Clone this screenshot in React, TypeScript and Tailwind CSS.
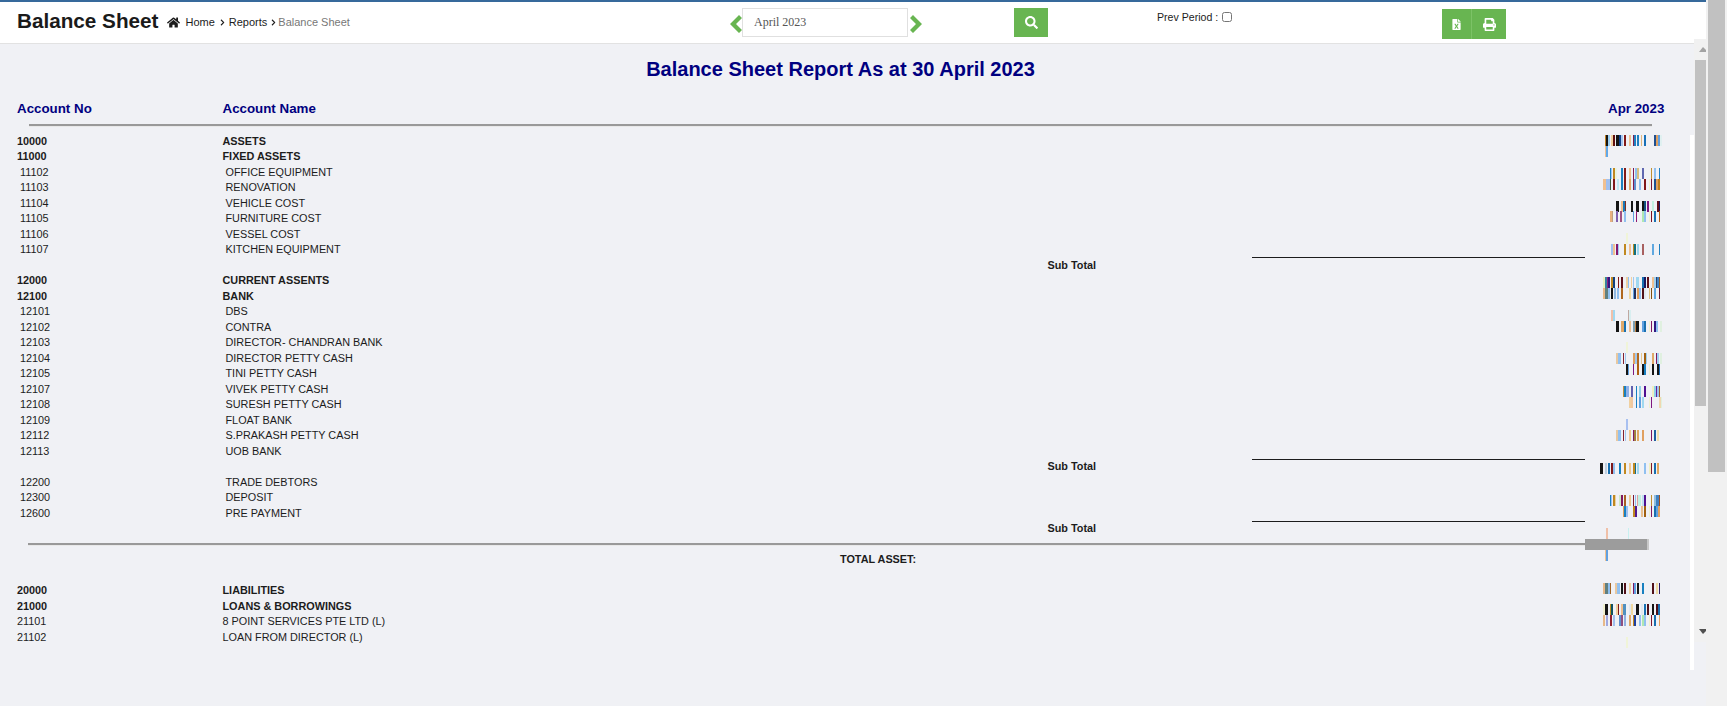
import { FaChevronRight, FaFileExcel, FaHome, FaPrint, FaSearch } from 'react-icons/fa';

type Row =
  | { kind: 'head'; no: string; name: string }
  | { kind: 'item'; no: string; name: string; plain?: boolean }
  | { kind: 'sub' }
  | { kind: 'hr' }
  | { kind: 'total' }
  | { kind: 'gap' };

const rows: Row[] = [
  { kind: 'head', no: '10000', name: 'ASSETS' },
  { kind: 'head', no: '11000', name: 'FIXED ASSETS' },
  { kind: 'item', no: '11102', name: 'OFFICE EQUIPMENT' },
  { kind: 'item', no: '11103', name: 'RENOVATION' },
  { kind: 'item', no: '11104', name: 'VEHICLE COST' },
  { kind: 'item', no: '11105', name: 'FURNITURE COST' },
  { kind: 'item', no: '11106', name: 'VESSEL COST' },
  { kind: 'item', no: '11107', name: 'KITCHEN EQUIPMENT' },
  { kind: 'sub' },
  { kind: 'head', no: '12000', name: 'CURRENT ASSENTS' },
  { kind: 'head', no: '12100', name: 'BANK' },
  { kind: 'item', no: '12101', name: 'DBS' },
  { kind: 'item', no: '12102', name: 'CONTRA' },
  { kind: 'item', no: '12103', name: 'DIRECTOR- CHANDRAN BANK' },
  { kind: 'item', no: '12104', name: 'DIRECTOR PETTY CASH' },
  { kind: 'item', no: '12105', name: 'TINI PETTY CASH' },
  { kind: 'item', no: '12107', name: 'VIVEK PETTY CASH' },
  { kind: 'item', no: '12108', name: 'SURESH PETTY CASH' },
  { kind: 'item', no: '12109', name: 'FLOAT BANK' },
  { kind: 'item', no: '12112', name: 'S.PRAKASH PETTY CASH' },
  { kind: 'item', no: '12113', name: 'UOB BANK' },
  { kind: 'sub' },
  { kind: 'item', no: '12200', name: 'TRADE DEBTORS' },
  { kind: 'item', no: '12300', name: 'DEPOSIT' },
  { kind: 'item', no: '12600', name: 'PRE PAYMENT' },
  { kind: 'sub' },
  { kind: 'hr' },
  { kind: 'total' },
  { kind: 'gap' },
  { kind: 'head', no: '20000', name: 'LIABILITIES' },
  { kind: 'head', no: '21000', name: 'LOANS & BORROWINGS' },
  { kind: 'item', no: '21101', name: '8 POINT SERVICES PTE LTD (L)', plain: true },
  { kind: 'item', no: '21102', name: 'LOAN FROM DIRECTOR (L)', plain: true },
];

// garbled amount column, x and width in thirds of a pixel from x=1595
const stripes: [number, string][] = [
  [135, '30 3 c08020,33 6 151515,39 6 9fd0f0,48 6 f0d0a0,54 6 601010,63 9 151515,72 6 10408a,78 6 a8c8f0,87 6 801818,102 6 f0c090,114 3 802050,117 6 2080c0,126 6 2080c0,138 3 e0b880,147 6 1870b8,177 6 205090,183 6 e0a060,189 6 60a0e0,195 6 e0f0f0'],
  [146, '30 3 f0c090,33 6 60a8e8'],
  [168, '45 3 2080c0,48 3 a0c8f0,54 6 c08820,60 6 e8f4e0,78 6 2080c0,87 6 801818,102 6 f0c090,114 3 801850,120 6 90c0f0,126 6 d8c080,141 6 6068b0,168 3 c09030,177 6 90c0f0,192 3 2080c0'],
  [179, '24 9 f0c090,33 12 a0c0f0,45 3 406040,54 6 801818,66 6 c0e8f0,78 6 2080c0,87 6 801818,102 6 e0a868,114 3 801850,117 6 6090d0,132 6 90c0f0,147 6 801818,162 3 f0f0d0,168 3 801830,177 6 205090,183 6 e0a060,189 6 c08020'],
  [201, '63 9 151515,78 6 f0c090,84 6 1878b8,90 3 803020,108 6 151515,123 9 151515,141 6 151515,147 6 105080,156 6 801880,171 6 c0f0e0,186 6 601018,192 3 181860'],
  [211, '45 6 e8b080,51 3 c0a080,63 6 8060b0,75 6 a05080,87 6 90c0f0,114 3 60a0e0,123 3 901870,141 6 b0e8b0,147 6 90c0f0,162 3 f0f0d0,168 3 801020,177 6 1870b0,192 3 b06010'],
  [233, '93 6 f0f4d8'],
  [244, '48 6 a0c0f0,54 6 f0c090,63 6 801870,69 3 a0c8f0,87 6 c08820,102 6 f0c090,114 3 c08820,117 6 107080,126 6 a0d8f0,141 6 a86060,171 6 60a8e0,192 3 2080c0'],
  [277, '24 6 e8f0c0,30 6 3880a0,36 3 902080,39 6 301880,48 6 c08820,54 6 104080,69 3 801818,78 6 601018,93 6 f0d0a0,99 3 90c0f0,108 3 f0d0a0,114 3 a0c8f0,123 9 a0d8f0,141 6 1870b0,147 6 181860,156 6 601018,171 6 f0c090,177 6 a0d0f0,183 3 204070,186 6 4080c0,192 3 a06020'],
  [288, '24 6 e8b888,30 9 608080,39 6 90c0f0,48 6 151515,57 6 90b8e0,66 6 90c0f0,78 6 b06820,102 6 f0d8a0,114 3 60a0e0,117 6 203060,126 6 e0a060,132 6 90c0f0,141 6 501018,147 6 e0e8f0,162 3 e0c080,168 3 805010,177 6 60a8e0,192 3 601830'],
  [310, '48 6 f0c0a8,54 6 a0d8f0,99 3 c0a8a0,102 6 d8eef0'],
  [321, '63 9 151515,78 9 e0a868,87 6 1870b0,102 6 f0c090,114 6 80a0b0,120 3 c08040,123 9 151515,141 6 60a0e0,147 6 1870b0,162 3 f0f0d0,168 3 801860,177 6 301880,183 6 90c0f0,195 6 e0f0e0'],
  [342, '93 6 f0f4d8'],
  [353, '63 6 e8c8a0,69 9 90c0f0,84 3 802030,90 3 a0c8f0,114 6 e0a060,120 6 a0c8f0,126 6 b06820,138 3 e8c890,147 6 a06010,153 3 a0d0f0,171 6 e0a868,183 3 801860,186 6 a0d0f0,195 6 e0f0e0'],
  [364, '93 6 151515,99 3 60a0e0,114 3 801880,126 6 b06010,141 6 151515,147 6 1880c0,162 3 f0f0d0,171 6 151515,186 6 151515,192 3 1870c0'],
  [386, '84 3 c09040,87 6 1880c0,93 9 90b0e8,108 6 6060b0,123 3 1880c0,132 6 90d0e8,147 6 501090,171 6 f0f0c0,177 6 90d0e8,183 3 6020a0,186 6 a0c0e8,192 3 a06020'],
  [397, '102 6 f0d0a0,108 6 f0c8a0,123 3 1880c0,132 6 60a0e0,141 6 a0d8f0,162 3 f0f0d0,168 3 801880,192 6 f0d8b0,198 3 e0f0e0'],
  [419, '93 6 a8c0f0'],
  [430, '63 6 e8c8a0,69 9 90c0f0,84 3 802030,90 3 a0c8f0,102 6 f0c890,114 3 801860,117 6 a08040,126 6 e0a860,141 6 e0a060,168 3 801860,177 6 2060a0,186 6 f0e0b0'],
  [463, '15 9 151515,30 6 c0d0e0,39 6 1870b0,48 6 801818,54 6 90c0f0,72 6 1880c0,87 6 c08820,102 6 f0c890,114 6 c08820,120 3 107090,126 6 a0d8f0,147 6 90c0f0,162 6 f0f0c0,168 3 801830,177 6 1870b0,186 6 e0a860'],
  [495, '45 3 1880c0,48 3 a0c0f0,54 6 c08820,60 3 e8d0a0,72 6 d0e8c0,78 6 801860,87 6 a86020,102 6 f0c890,114 3 801830,120 3 90c0f0,126 3 e0a0a0,129 9 c0f0e0,141 6 c0e0f0,147 6 501090,168 3 c09030,177 6 90c0e0,183 9 4080c0,192 3 a05020'],
  [506, '84 3 e0a060,87 6 1880c0,93 6 a0c0f0,114 6 c08820,120 6 501890,138 6 e8c090,147 6 a06010,162 3 f0f0d0,168 3 801860,177 6 1870b0,183 6 60a0e0,189 6 e0a060'],
  [528, '33 6 f0c0a8,99 3 c8f0f0'],
  [550, '30 3 f0c090,33 6 60a0e0'],
  [583, '24 6 e8b888,30 9 608080,39 6 90c0f0,45 3 a06020,60 6 e8c8a0,66 9 90c0f0,78 6 151515,87 6 501018,102 6 f0d0a0,114 3 801860,117 6 60a0e0,126 6 151515,141 6 1880c0,171 6 501018,183 6 f0d8a0,192 3 301860'],
  [604, '24 6 f0f0d0,30 9 151515,45 3 c09020,48 6 105060,63 6 f0d0a0,69 3 801818,78 6 f0c090,84 9 5090c0,102 6 e0e8f0,108 6 f0d8a0,123 9 151515,138 6 e0e8f0,147 6 1870b0,156 6 501018,171 6 151515,183 6 501018,189 6 1870b0'],
  [615, '24 6 e8b888,33 6 a0a8e0,45 6 902030,54 6 a0c0f0,72 6 6090d0,78 6 905080,87 6 90b0e0,102 6 e0a868,114 3 c08820,117 6 2040a0,132 6 90c0f0,141 6 b0e8b0,147 6 90c0f0,162 3 f0f0d0,168 3 801830,177 6 1870b0,192 3 e0a060'],
  [637, '93 6 f0f4d8'],
];

function AmountStripes() {
  return (
    <svg
      className="absolute left-[1595px] top-[86px]"
      width="70"
      height="520"
      viewBox="0 0 210 1560"
      shapeRendering="crispEdges"
    >
      {stripes.map(([y, bars]) =>
        bars.split(',').map((bar) => {
          const [x, w, color] = bar.split(' ');
          return (
            <rect key={`${y}-${x}`} x={x} y={(y - 130) * 3} width={w} height={33} fill={`#${color}`} />
          );
        }),
      )}
    </svg>
  );
}

function ReportRow({ row }: { row: Row }) {
  const grid = 'grid h-[15.5px] grid-cols-[222.5px_825px_204.5px_333px] items-center text-[10.85px] leading-[15.5px] text-[#1c1c1c]';

  if (row.kind === 'gap') return <div className="h-[15.5px]" />;
  if (row.kind === 'hr') {
    return (
      <div className="flex h-[15.5px] items-start pl-[28px]">
        <div className="mt-[6.25px] h-[3px] w-[1557px] border-b border-[#e8e8e8] bg-[#999999]" />
        <div className="mt-[2.25px] h-[11px] w-[62px] bg-[#9c9c9c]" />
        <div className="mt-[2.25px] h-[11px] w-[2px] bg-[#c8c8c8]" />
      </div>
    );
  }
  if (row.kind === 'sub') {
    return (
      <div className={grid}>
        <span />
        <span />
        <span className="font-bold">Sub Total</span>
        <div className="-mt-[0.75px] h-[15.5px] self-start border-t-[1.5px] border-[#1c1c1c]" />
      </div>
    );
  }
  if (row.kind === 'total') {
    return (
      <div className={grid}>
        <span />
        <span className="pl-[617.5px] font-bold">TOTAL ASSET:</span>
      </div>
    );
  }
  if (row.kind === 'head') {
    return (
      <div className={`${grid} font-bold`}>
        <span className="pl-[17px]">{row.no}</span>
        <span>{row.name}</span>
      </div>
    );
  }
  return (
    <div className={grid}>
      <span className={row.plain ? 'pl-[17px]' : 'pl-[20px]'}>{row.no}</span>
      <span className={row.plain ? '' : 'pl-[3px]'}>{row.name}</span>
    </div>
  );
}

export default function App() {
  return (
    <div className="flex h-[706px] w-[1727px] overflow-hidden bg-[#f1f1f1] font-['Liberation_Sans',Arial,sans-serif]">
      <div className="flex w-[1706px] shrink-0 flex-col">
        <header className="flex h-[44px] shrink-0 border-t-2 border-b border-t-[#36699b] border-b-[#e2e2e2] bg-white">
          <div className="flex w-[730px] shrink-0 items-center pb-[3px] pl-[17px]">
            <h1 className="text-[20.7px] leading-none font-bold text-[#1a1a1a]">Balance Sheet</h1>
            <nav className="ml-[9px] flex items-center pt-[3px] text-[11px] text-[#1c1c1c]">
              <FaHome size={13} className="mr-[5px]" />
              <span>Home</span>
              <FaChevronRight size={7} className="mr-[3px] ml-[4px]" />
              <span>Reports</span>
              <FaChevronRight size={7} className="mr-[1px] ml-[3px]" />
              <span className="text-[#777777]">Balance Sheet</span>
            </nav>
          </div>
          <div className="flex h-[41px] items-start">
            <svg width="12" height="18" viewBox="0 0 12 18" className="mt-[13px] text-[#68b551]">
              <path d="M9 0 L12 3 L6 9 L12 15 L9 18 L0 9 Z" fill="currentColor" />
            </svg>
            <input
              readOnly
              value="April 2023"
              className="mt-[6px] h-[29px] w-[166px] border border-[#e0e0e0] bg-white pl-[11px] font-['Liberation_Serif',serif] text-[12px] text-[#555555] outline-none"
            />
            <svg width="12" height="18" viewBox="0 0 12 18" className="mt-[13px] ml-[2px] text-[#68b551]">
              <path d="M3 0 L0 3 L6 9 L0 15 L3 18 L12 9 Z" fill="currentColor" />
            </svg>
            <button className="mt-[6px] ml-[92px] flex h-[29px] w-[34px] items-center justify-center bg-[#68b551] text-white">
              <FaSearch size={13} />
            </button>
            <label className="mt-[9px] ml-[109px] flex items-start text-[10.6px] leading-[13px] text-[#1c1c1c]">
              <span>Prev Period :</span>
              <input type="checkbox" className="mt-px ml-[4px] h-[10px] w-[10px]" />
            </label>
            <div className="mt-[7px] ml-[210px] flex h-[30px] w-[64px] bg-[#68b551] text-white">
              <button className="flex w-[30px] items-center justify-center border-r border-[#7cc266]">
                <FaFileExcel size={11} />
              </button>
              <button className="flex flex-1 items-center justify-center pl-[1px]">
                <FaPrint size={13} />
              </button>
            </div>
          </div>
        </header>

        <div className="flex min-h-0 flex-1 bg-[#f0f1f5]">
          <main className="relative w-[1690px] shrink-0 pt-[11px]">
            <h2 className="h-[28px] pr-[9px] text-center text-[20px] leading-[28px] font-bold text-[#000080]">
              Balance Sheet Report As at 30 April 2023
            </h2>
            <div className="mt-[16px] flex h-[20px] items-center text-[13.33px] font-bold text-[#000080]">
              <span className="w-[222.5px] pl-[17px]">Account No</span>
              <span className="w-[1385.5px]">Account Name</span>
              <span>Apr 2023</span>
            </div>
            <div className="mt-[5px] ml-[29px] h-[3px] w-[1623px] border-b border-[#e8e8e8] bg-[#999999]" />
            <div className="mt-[6.75px]">
              {rows.map((row, i) => (
                <ReportRow key={i} row={row} />
              ))}
            </div>
            <AmountStripes />
          </main>

          <div className="mt-[91px] h-[535px] w-[4px] shrink-0 bg-white" />

          <div className="relative z-10 -mt-[5px] flex h-[603px] w-[12px] shrink-0 flex-col items-end bg-[#f1f1f1]">
            <div className="flex h-[21px] w-full items-center justify-end">
              <svg width="7" height="5" viewBox="0 0 7 5">
                <path d="M0 5 L4 0 L7 3 L7 5 Z" fill="#a3a3a3" />
              </svg>
            </div>
            <div className="h-[346px] w-[11px] bg-[#c1c1c1]" />
            <div className="flex flex-1 items-start justify-end pt-[223px]">
              <svg width="7" height="5" viewBox="0 0 7 5">
                <path d="M0 0 L7 0 L7 2 L4 5 Z" fill="#505050" />
              </svg>
            </div>
          </div>
        </div>
      </div>

      <div className="ml-[2px] w-[17px] shrink-0">
        <div className="h-[472px] bg-[#c1c1c1]" />
      </div>
    </div>
  );
}
